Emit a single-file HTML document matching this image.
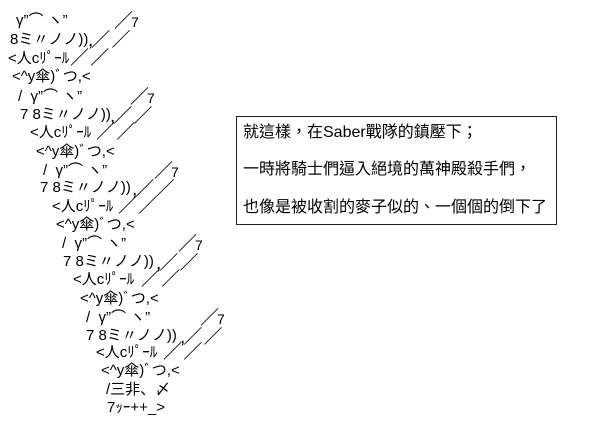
<!DOCTYPE html>
<html><head><meta charset="utf-8"><style>
body{margin:0;width:597px;height:428px;background:#fff;position:relative;overflow:hidden;font-family:"Liberation Sans","Noto Sans CJK JP",sans-serif;color:#000}
.a{position:absolute;font-size:15px;line-height:16px;white-space:pre}
.s{position:absolute;font-size:19px;line-height:20px;white-space:pre;letter-spacing:-2px}
.s b{font-weight:normal;font-size:14px}
.box{position:absolute;left:236px;top:116px;width:319px;height:107px;border:1px solid #222}
.t{position:absolute;left:243px;font-size:16px;line-height:18px;white-space:pre;font-family:"Liberation Sans","Noto Sans CJK TC",sans-serif}
</style></head><body>
<div class="a" style="left:16px;top:13px">γ”⌒ ヽ”</div><div class="s" style="left:114px;top:12px">／<b>7</b></div>
<div class="a" style="left:10px;top:32px">8ミ〃ノノ))</div><div class="s" style="left:88px;top:31px">,／ ／</div>
<div class="a" style="left:8px;top:51px">&lt;人cﾘﾟｰﾙ</div><div class="s" style="left:70px;top:49px">／ ／</div>
<div class="a" style="left:12px;top:69px">&lt;^y傘)ﾞつ,&lt;</div>
<div class="a" style="left:18px;top:89px">/  γ”⌒ ヽ”</div><div class="s" style="left:130px;top:88px">／<b>7</b></div>
<div class="a" style="left:20px;top:107px">7 8ミ〃ノノ))</div><div class="s" style="left:110px;top:107px">,／ ／</div>
<div class="a" style="left:30px;top:125px">&lt;人cﾘﾟｰﾙ</div><div class="s" style="left:96px;top:123px">／ ／</div>
<div class="a" style="left:36px;top:144px">&lt;^y傘)ﾞつ,&lt;</div>
<div class="a" style="left:43px;top:163px">/  γ”⌒ ヽ”</div><div class="s" style="left:154px;top:162px">／<b>7</b></div>
<div class="a" style="left:40px;top:180px">7 8ミ〃ノノ))</div><div class="s" style="left:132px;top:180px">,／ ／</div>
<div class="a" style="left:52px;top:199px">&lt;人cﾘﾟｰﾙ</div><div class="s" style="left:118px;top:197px">／ ／</div>
<div class="a" style="left:56px;top:217px">&lt;^y傘)ﾞつ,&lt;</div>
<div class="a" style="left:62px;top:236px">/  γ”⌒ ヽ”</div><div class="s" style="left:178px;top:235px">／<b>7</b></div>
<div class="a" style="left:63px;top:254px">7 8ミ〃ノノ))</div><div class="s" style="left:156px;top:254px">,／ ／</div>
<div class="a" style="left:73px;top:272px">&lt;人cﾘﾟｰﾙ</div><div class="s" style="left:141px;top:270px">／ ／</div>
<div class="a" style="left:80px;top:291px">&lt;^y傘)ﾞつ,&lt;</div>
<div class="a" style="left:86px;top:310px">/  γ”⌒ ヽ”</div><div class="s" style="left:200px;top:309px">／<b>7</b></div>
<div class="a" style="left:86px;top:328px">7 8ミ〃ノノ))</div><div class="s" style="left:180px;top:328px">,／ ／</div>
<div class="a" style="left:96px;top:345px">&lt;人cﾘﾟｰﾙ</div><div class="s" style="left:163px;top:343px">／ ／</div>
<div class="a" style="left:101px;top:363px">&lt;^y傘)ﾞつ,&lt;</div>
<div class="a" style="left:106px;top:382px">/三非、〆</div>
<div class="a" style="left:107px;top:400px">7ｯｰ++_&gt;</div>
<div class="box"></div>
<div class="t" style="top:124px">就這樣，在Saber戰隊的鎮壓下；</div>
<div class="t" style="top:161px">一時將騎士們逼入絕境的萬神殿殺手們，</div>
<div class="t" style="top:199px">也像是被收割的麥子似的、一個個的倒下了</div>
</body></html>
